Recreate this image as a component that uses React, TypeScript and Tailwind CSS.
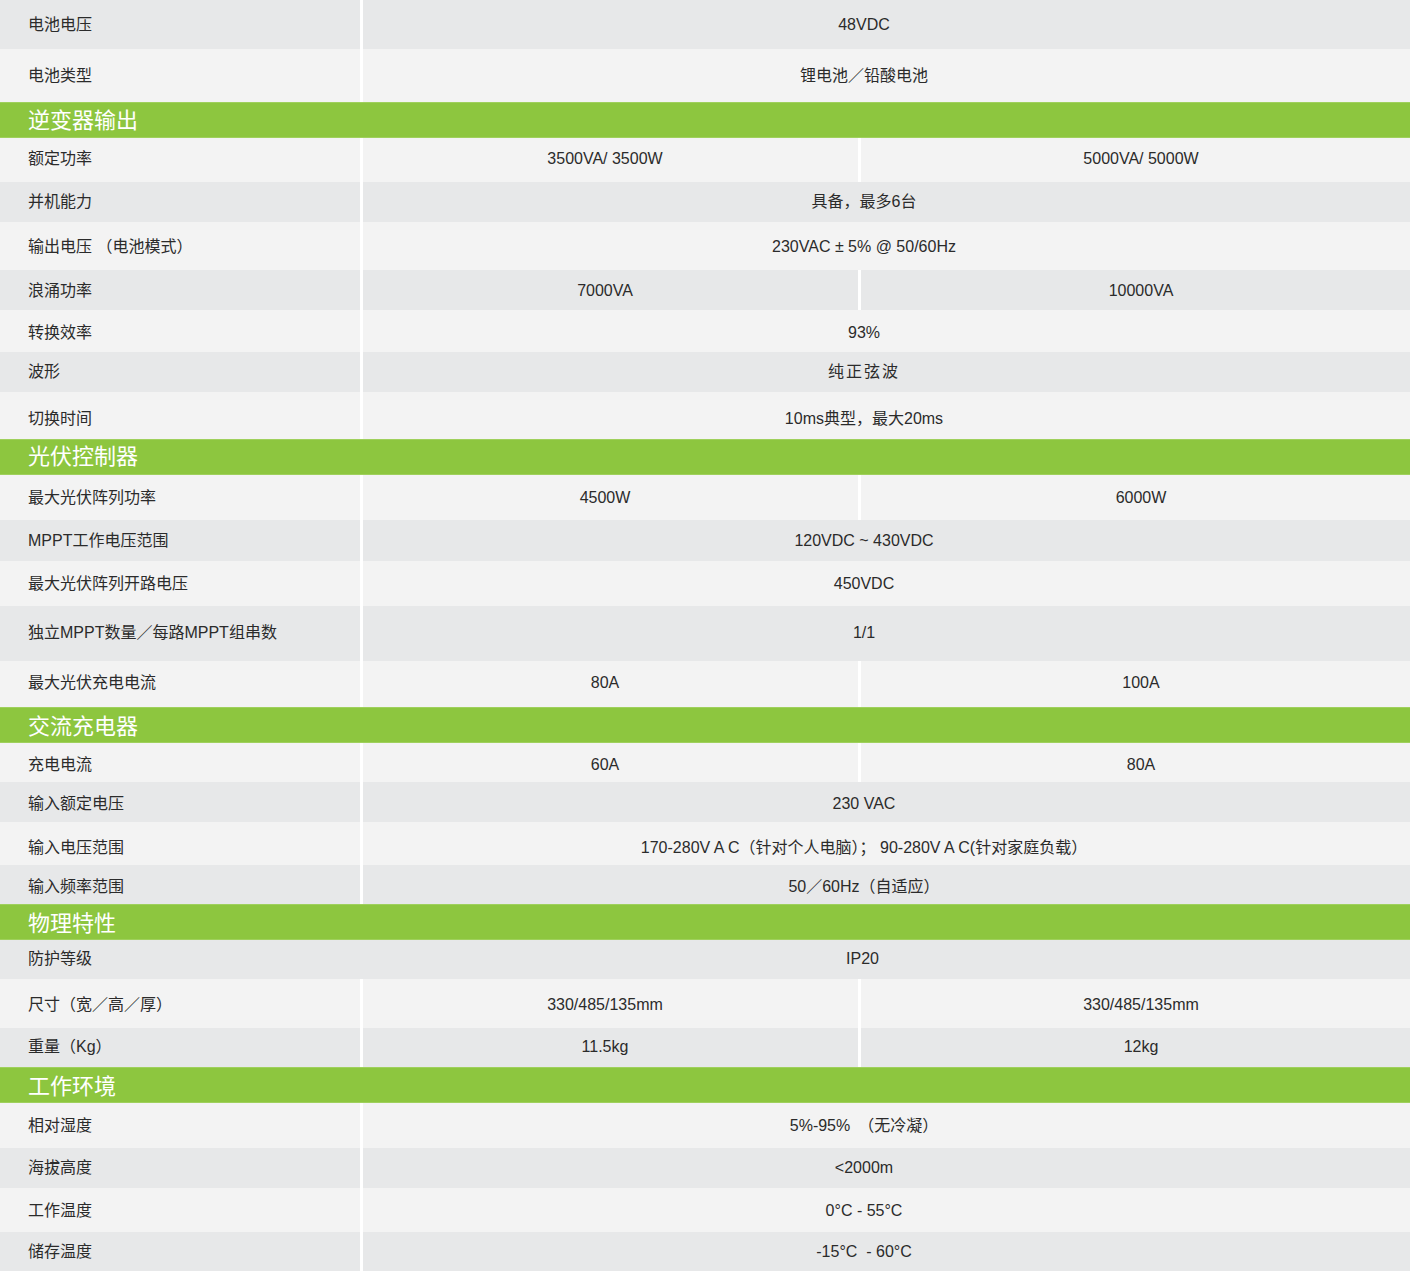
import React from "react";

type Row = {
  label: string;
  values: string[];
  h: number;
  dark: boolean;
  dy?: number;
  noDivider?: boolean;
  wide?: boolean;
};

type Section = {
  title?: string;
  dy?: number;
  rows: Row[];
};

// nudges text up (negative) or down (positive) inside its row
const shift: Record<string, string> = {
  "-3": "pb-[2px]",
  "-2": "",
  "-1": "pt-[2px]",
  "0": "pt-[4px]",
  "1": "pt-[6px]",
  "2": "pt-[8px]",
};

const sections: Section[] = [
  {
    rows: [
      { label: "电池电压", values: ["48VDC"], h: 49, dark: true, dy: -2 },
      { label: "电池类型", values: ["锂电池／铅酸电池"], h: 53, dark: false, dy: -2 },
    ],
  },
  {
    title: "逆变器输出",
    dy: -2,
    rows: [
      { label: "额定功率", values: ["3500VA/ 3500W", "5000VA/ 5000W"], h: 44, dark: false, dy: -3 },
      { label: "并机能力", values: ["具备，最多6台"], h: 40, dark: true, dy: -2 },
      { label: "输出电压 （电池模式）", values: ["230VAC ± 5% @ 50/60Hz"], h: 48, dark: false, dy: -1 },
      { label: "浪涌功率", values: ["7000VA", "10000VA"], h: 40, dark: true, dy: -1 },
      { label: "转换效率", values: ["93%"], h: 42, dark: false },
      { label: "波形", values: ["纯正弦波"], h: 40, dark: true, wide: true, dy: -2 },
      { label: "切换时间", values: ["10ms典型，最大20ms"], h: 47, dark: false, dy: 1 },
    ],
  },
  {
    title: "光伏控制器",
    dy: -3,
    rows: [
      { label: "最大光伏阵列功率", values: ["4500W", "6000W"], h: 45, dark: false, dy: -2 },
      { label: "MPPT工作电压范围", values: ["120VDC ~ 430VDC"], h: 41, dark: true, dy: -2 },
      { label: "最大光伏阵列开路电压", values: ["450VDC"], h: 45, dark: false, dy: -2 },
      { label: "独立MPPT数量／每路MPPT组串数", values: ["1/1"], h: 55, dark: true, dy: -3 },
      { label: "最大光伏充电电流", values: ["80A", "100A"], h: 46, dark: false, dy: -3 },
    ],
  },
  {
    title: "交流充电器",
    dy: -1,
    rows: [
      { label: "充电电流", values: ["60A", "80A"], h: 39, dark: false },
      { label: "输入额定电压", values: ["230 VAC"], h: 40, dark: true },
      {
        label: "输入电压范围",
        values: ["170-280V A C（针对个人电脑）； 90-280V A C(针对家庭负载）"],
        h: 43,
        dark: false,
        dy: 2,
      },
      { label: "输入频率范围", values: ["50／60Hz（自适应）"], h: 39, dark: true },
    ],
  },
  {
    title: "物理特性",
    dy: -1,
    rows: [
      { label: "防护等级", values: ["IP20"], h: 39, dark: true, noDivider: true, dy: -3 },
      { label: "尺寸（宽／高／厚）", values: ["330/485/135mm", "330/485/135mm"], h: 49, dark: false, dy: -1 },
      { label: "重量（Kg）", values: ["11.5kg", "12kg"], h: 39, dark: true, dy: -3 },
    ],
  },
  {
    title: "工作环境",
    dy: -1,
    rows: [
      { label: "相对湿度", values: ["5%-95%　（无冷凝）"], h: 45, dark: false, dy: -2 },
      { label: "海拔高度", values: ["<2000m"], h: 40, dark: true, dy: -2 },
      { label: "工作温度", values: ["0°C - 55°C"], h: 44, dark: false, dy: -1 },
      { label: "储存温度", values: ["-15°C  - 60°C"], h: 39, dark: true, dy: -2 },
    ],
  },
];

function SpecRow({ row }: { row: Row }) {
  const bg = row.dark ? "bg-[#e7e8e9]" : "bg-[#f3f3f3]";
  const nudge = shift[String(row.dy ?? 0)];
  return (
    <div className={`flex ${row.noDivider ? bg : "gap-[3px]"}`} style={{ height: row.h }}>
      <div className={`w-[360px] flex items-center pl-[28px] ${bg} ${nudge}`}>{row.label}</div>
      {row.values.length === 1 ? (
        <div
          className={`flex-1 flex items-center justify-center pr-[45px] whitespace-pre ${bg} ${nudge} ${
            row.wide ? "tracking-[2px]" : ""
          }`}
        >
          {row.values[0]}
        </div>
      ) : (
        <div className="flex-1 flex gap-[3px]">
          <div className={`w-[495px] flex items-center justify-center pr-[11px] ${bg} ${nudge}`}>
            {row.values[0]}
          </div>
          <div className={`flex-1 flex items-center justify-center pl-[11px] ${bg} ${nudge}`}>
            {row.values[1]}
          </div>
        </div>
      )}
    </div>
  );
}

export default function App() {
  return (
    <div
      className="w-[1415px] h-[1286px] bg-white text-[16px] text-[#2b2b2b]"
      style={{ fontFamily: '"Liberation Sans", "Noto Sans CJK SC", sans-serif' }}
    >
      <div className="w-[1410px] flex flex-col">
        {sections.map((sec, i) => (
          <React.Fragment key={i}>
            {sec.title && (
              <div
                className={`h-[36px] bg-[#8dc63f] flex items-center pl-[28px] text-white text-[22px] border-y border-[#9fd05c] ${
                  shift[String(sec.dy ?? 0)]
                }`}
              >
                {sec.title}
              </div>
            )}
            {sec.rows.map((row, j) => (
              <SpecRow key={j} row={row} />
            ))}
          </React.Fragment>
        ))}
      </div>
    </div>
  );
}
